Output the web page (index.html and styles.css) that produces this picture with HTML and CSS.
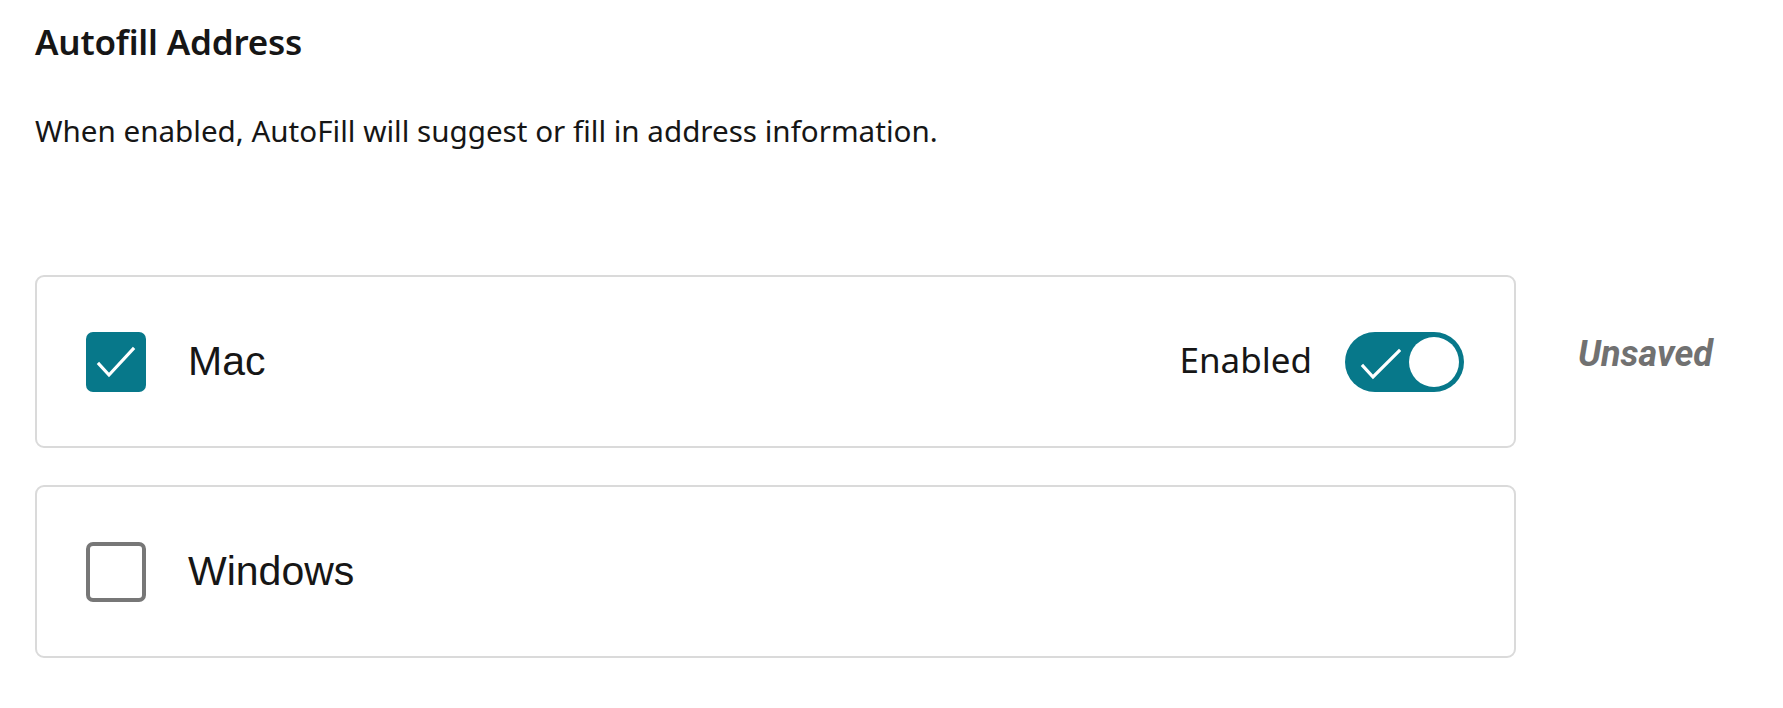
FILE: index.html
```html
<!DOCTYPE html>
<html lang="en">
<head>
<meta charset="utf-8">
<title>Autofill Address</title>
<link rel="stylesheet" href="styles.css">
</head>
<body>
<main class="page">
  <h1 class="title">Autofill Address</h1>
  <p class="desc">When enabled, AutoFill will suggest or fill in address information.</p>

  <div class="rows">
    <div class="row">
      <div class="card">
        <span class="checkbox checked">
          <svg viewBox="0 0 60 60" width="60" height="60" aria-hidden="true">
            <path d="M13 32 L23 43 L47 17" fill="none" stroke="#fff" stroke-width="3.2" stroke-linecap="square"/>
          </svg>
        </span>
        <span class="label">Mac</span>
        <div class="status">
          <span class="status-text">Enabled</span>
          <span class="toggle on">
            <svg class="toggle-check" viewBox="0 0 44 60" width="44" height="60" aria-hidden="true">
              <path d="M6 34 L16 45 L42 19" fill="none" stroke="#fff" stroke-width="3.2" stroke-linecap="square"/>
            </svg>
            <span class="knob"></span>
          </span>
        </div>
      </div>
      <span class="unsaved">Unsaved</span>
    </div>

    <div class="row">
      <div class="card">
        <span class="checkbox"></span>
        <span class="label">Windows</span>
      </div>
    </div>
  </div>
</main>
</body>
</html>
```

FILE: styles.css
```css
html, body {
  margin: 0;
  padding: 0;
  background: #ffffff;
}

.page {
  padding: 20px 0 0 35px;
  font-family: "Noto Sans", "Liberation Sans", sans-serif;
  color: #161616;
}

.title {
  margin: 0;
  font-size: 35px;
  font-weight: 600;
  line-height: 44px;
  letter-spacing: -0.2px;
}

.desc {
  margin: 47px 0 0 0;
  font-size: 29.6px;
  line-height: 40px;
  font-weight: 400;
}

.rows {
  margin-top: 124px;
  display: flex;
  flex-direction: column;
  gap: 37px;
}

.row {
  display: flex;
  align-items: center;
  gap: 62px;
}

.card {
  box-sizing: border-box;
  width: 1481px;
  height: 173px;
  border: 2px solid #dadada;
  border-radius: 9px;
  display: flex;
  align-items: center;
  padding: 0 50px 0 49px;
}

.checkbox {
  box-sizing: border-box;
  width: 60px;
  height: 60px;
  border-radius: 7px;
  border: 4px solid #777777;
  background: #fff;
  flex: none;
  display: flex;
  align-items: center;
  justify-content: center;
}

.checkbox.checked {
  border: none;
  background: #07788a;
}

.checkbox svg {
  display: block;
}

.label {
  margin-left: 42px;
  font-family: "Liberation Sans", Arial, sans-serif;
  font-size: 41px;
  color: #161616;
}

.status {
  margin-left: auto;
  display: flex;
  align-items: center;
  gap: 33px;
}

.status-text {
  font-size: 35px;
  color: #161616;
  margin-top: -4px;
}

.toggle {
  box-sizing: border-box;
  width: 119px;
  height: 60px;
  border-radius: 30px;
  background: #07788a;
  display: flex;
  align-items: center;
  padding: 0 5px 0 12px;
}

.toggle-check {
  display: block;
}

.knob {
  margin-left: auto;
  width: 50px;
  height: 50px;
  border-radius: 50%;
  background: #ffffff;
}

.unsaved {
  font-family: "Roboto", sans-serif;
  font-style: italic;
  font-weight: 700;
  font-size: 36px;
  color: #717171;
  margin-top: -16px;
}
```
